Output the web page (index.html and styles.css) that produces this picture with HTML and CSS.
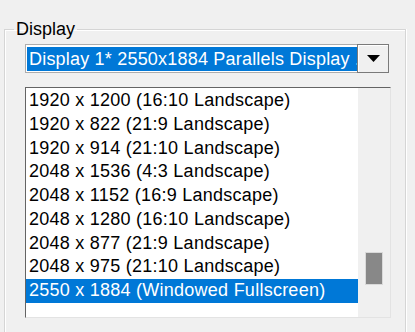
FILE: index.html
```html
<!DOCTYPE html>
<html lang="en">
<head>
    <meta charset="UTF-8">
    <meta name="viewport" content="width=device-width, initial-scale=1.0">
    <title>Display</title>
    <link rel="stylesheet" href="styles.css">
</head>
<body>

    <fieldset class="group">
        <legend>Display</legend>

        <!-- Selector del monitor -->
        <div class="combo">
            <div class="combo-value">Display 1* 2550x1884 Parallels Display .</div>
            <div class="combo-btn">
                <svg width="13" height="7" viewBox="0 0 13 7"><polygon points="0,0 13,0 6.5,7" fill="#000"/></svg>
            </div>
        </div>

        <!-- Lista de resoluciones -->
        <div class="listbox">
            <ul class="items">
                <li>1920 x 1200 (16:10 Landscape)</li>
                <li>1920 x 822 (21:9 Landscape)</li>
                <li>1920 x 914 (21:10 Landscape)</li>
                <li>2048 x 1536 (4:3 Landscape)</li>
                <li>2048 x 1152 (16:9 Landscape)</li>
                <li>2048 x 1280 (16:10 Landscape)</li>
                <li>2048 x 877 (21:9 Landscape)</li>
                <li>2048 x 975 (21:10 Landscape)</li>
                <li class="selected">2550 x 1884 (Windowed Fullscreen)</li>
            </ul>
            <div class="scrollbar">
                <div class="thumb"></div>
            </div>
        </div>
    </fieldset>

</body>
</html>
```

FILE: styles.css
```css
body {
    margin: 0;
    height: 332px;
    background: #f0f0f0;
    font-family: "Liberation Sans", Arial, sans-serif;
    font-size: 18px;
    color: #000;
    overflow: hidden;
}
.group {
    margin: 19px 0 0 4px;
    width: 402px;
    padding: 0 0 16px 20px;
    border: 1px solid #d5d5d5;
    box-shadow: inset 1px 1px 0 #fff, 1px 0 0 #fff;
    box-sizing: border-box;
}
.group legend {
    margin-left: -11px;
    padding: 0 2px;
    line-height: 20px;
}
.combo {
    margin-top: 5px;
    width: 364px;
    height: 29px;
    box-sizing: border-box;
    border: 1px solid #adadad;
    background: #fff;
    display: flex;
    padding: 2px 0 1px 1px;
}
.combo-value {
    flex: 1;
    background: #0078d7;
    color: #fff;
    line-height: 24px;
    height: 24px;
    padding-left: 2px;
    letter-spacing: 0.2px;
    white-space: nowrap;
    overflow: hidden;
}
.combo-btn {
    width: 32px;
    margin: -3px -1px -2px 0;
    box-sizing: border-box;
    border: 1px solid #7a7a7a;
    box-shadow: inset 1px 1px 0 #fff;
    background: #f0f0f0;
    display: flex;
    align-items: center;
    justify-content: center;
}
.listbox {
    margin-top: 14px;
    width: 366px;
    height: 231px;
    box-sizing: border-box;
    background: #fff;
    border-top: 1px solid #646464;
    border-left: 1px solid #646464;
    border-right: 1px solid #e3e3e3;
    border-bottom: 1px solid #e3e3e3;
    display: flex;
}
.items {
    list-style: none;
    margin: 0;
    padding: 1px 0 0;
    width: 332px;
}
.items li {
    height: 23.75px;
    line-height: 23.75px;
    padding-left: 3px;
    letter-spacing: 0.25px;
    white-space: nowrap;
}
.items li.selected {
    background: #0078d7;
    color: #fff;
}
.scrollbar {
    flex: 1;
    background: #f0f0f0;
    padding: 164px 0 0 7px;
}
.thumb {
    width: 18px;
    height: 33px;
    box-sizing: border-box;
    background: #888;
    border: 1px solid #d9d9d9;
}
```
